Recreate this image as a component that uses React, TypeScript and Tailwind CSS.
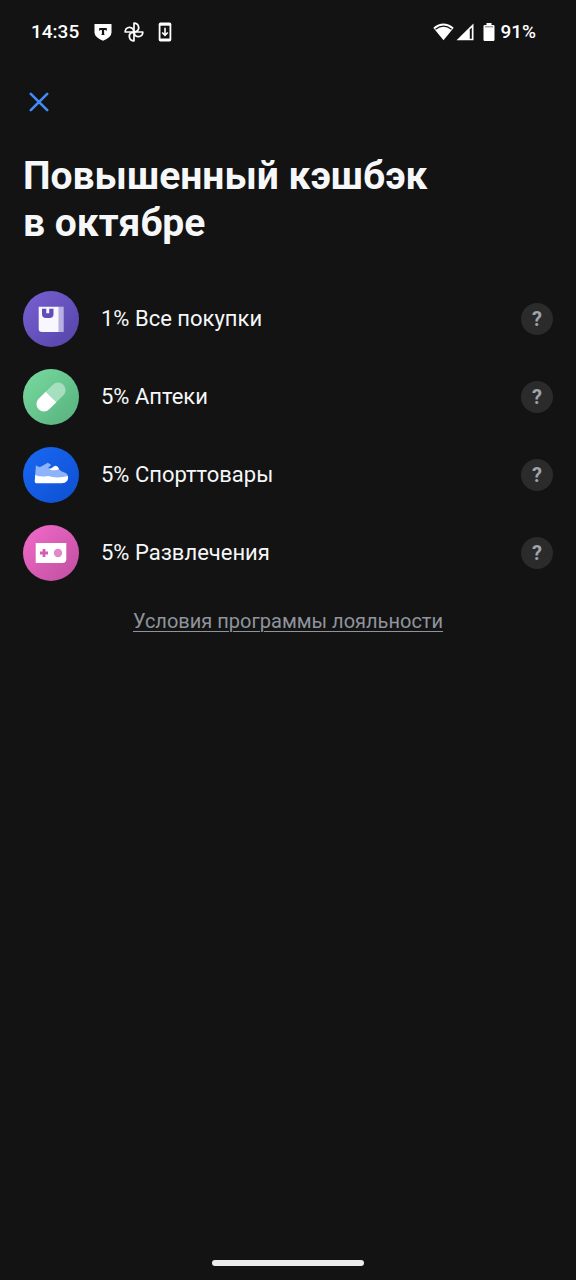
import type { ReactNode } from "react";

function BagIcon() {
  return (
    <svg viewBox="0 0 56 56" className="size-14" aria-hidden="true">
      <defs>
        <linearGradient id="bag" x1="0" y1="0" x2="1" y2="1">
          <stop offset="0" stopColor="#7860d3" />
          <stop offset="1" stopColor="#5444a6" />
        </linearGradient>
      </defs>
      <circle cx="28" cy="28" r="28" fill="url(#bag)" />
      <path d="M35.5 15.7H40.7V41H35.5Z" fill="#b9b0e2" />
      <path d="M15.7 15.7H35.7V41H19Q15.7 41 15.7 37.7Z" fill="#f8f7fd" />
      <path d="M19 17.8H23.3V22.2H26.2V17.8H30.5V23Q30.5 27 26.5 27H23Q19 27 19 23Z" fill="#604db9" />
    </svg>
  );
}

function PillIcon() {
  return (
    <svg viewBox="0 0 56 56" className="size-14" aria-hidden="true">
      <defs>
        <linearGradient id="pill" x1="0" y1="0" x2="1" y2="1">
          <stop offset="0" stopColor="#78dba1" />
          <stop offset="1" stopColor="#57b07c" />
        </linearGradient>
      </defs>
      <circle cx="28" cy="28" r="28" fill="url(#pill)" />
      <g transform="rotate(-45 28 28)">
        <path d="M28 20.5H38A7.5 7.5 0 0 1 38 35.5H28Z" fill="#a5dfbd" />
        <path d="M28 20.5H18A7.5 7.5 0 0 0 18 35.5H28Z" fill="#ffffff" />
      </g>
    </svg>
  );
}

function ShoeIcon() {
  return (
    <svg viewBox="0 0 56 56" className="size-14" aria-hidden="true">
      <defs>
        <linearGradient id="shoe" x1="0" y1="0" x2="1" y2="1">
          <stop offset="0" stopColor="#1969f4" />
          <stop offset="1" stopColor="#0e4fd0" />
        </linearGradient>
      </defs>
      <circle cx="28" cy="28" r="28" fill="url(#shoe)" />
      <path d="M12.9 18.3Q16.5 21.2 19.5 18.8L24.8 15.7L28.3 18L25 21L36 22.2Q38 24.4 41.5 25.6Q45 26.8 45 30L33 33L12 30Z" fill="#8db3fa" />
      <path d="M26.5 22.4L31.5 19Q34.3 18.2 36.3 22.2Q31.5 24.4 26.5 22.4Z" fill="#ffffff" />
      <path d="M12.2 28Q18 30.6 25 29Q34 31.8 45 29Q46 36.3 38.5 36.3H13.2Q11.7 36.3 11.7 34.5Z" fill="#ffffff" />
    </svg>
  );
}

function ConsoleIcon() {
  return (
    <svg viewBox="0 0 56 56" className="size-14" aria-hidden="true">
      <defs>
        <linearGradient id="console" x1="0" y1="0" x2="1" y2="1">
          <stop offset="0" stopColor="#f36aca" />
          <stop offset="1" stopColor="#bd4f9f" />
        </linearGradient>
      </defs>
      <circle cx="28" cy="28" r="28" fill="url(#console)" />
      <path d="M12.7 18H43.3V34Q43.3 38 39.3 38H12.7Z" fill="#ffffff" />
      <path d="M21 24V32M17 28H25" stroke="#d65cb3" strokeWidth="2.8" />
      <circle cx="35" cy="28" r="4.2" fill="#e08ac8" />
    </svg>
  );
}

function StatusBar() {
  return (
    <div className="flex h-16 items-center justify-between pr-10 pl-[31px] text-[19px] font-medium text-white">
      <div className="flex items-center">
        <time className="mr-[15px]">14:35</time>
        <svg viewBox="0 0 18 18" className="mr-3 size-[18px]" aria-hidden="true">
          <path d="M0.5 1H17.5V9.5Q17.5 14.2 9 17.8Q0.5 14.2 0.5 9.5Z" fill="#fff" />
          <path d="M5.2 5H12.8V7.8H12L11.6 7H10.1V11L10.8 12H7.2L7.9 11V7H6.4L6 7.8H5.2Z" fill="#131313" />
        </svg>
        <svg viewBox="0 0 20 20" className="mr-3.5 size-5" fill="none" stroke="#fff" strokeWidth="1.7" strokeLinejoin="round" aria-hidden="true">
          <path d="M10 10V1.2C15 1.2 16.2 7.2 12.6 9.2L10 10" />
          <path d="M10 10H18.8C18.8 15 12.8 16.2 10.8 12.6L10 10" />
          <path d="M10 10V18.8C5 18.8 3.8 12.8 7.4 10.8L10 10" />
          <path d="M10 10H1.2C1.2 5 7.2 3.8 9.2 7.4L10 10" />
        </svg>
        <svg viewBox="0 0 14 20" className="h-5 w-3.5" aria-hidden="true">
          <rect x="0.7" y="0.5" width="12.6" height="19" rx="1.8" fill="#fff" />
          <rect x="2.5" y="3.7" width="9" height="12.8" fill="#131313" />
          <path d="M7 5.7V13M4.2 10.5L7 13.3L9.8 10.5" fill="none" stroke="#fff" strokeWidth="1.6" />
        </svg>
      </div>
      <div className="flex items-center">
        <svg viewBox="0 0 21 18" className="mr-0.5 h-[18px] w-[21px]" aria-hidden="true">
          <path d="M0.3 4.7Q10.5 -3.5 20.7 4.7L10.5 17.3Z" fill="#fff" />
          <path d="M2.5 6.2Q10.5 0.2 18.5 6.2" fill="none" stroke="#131313" strokeWidth="1.3" />
        </svg>
        <svg viewBox="0 0 18 18" className="mr-[9px] size-[18px]" aria-hidden="true">
          <path d="M0.5 17.3L17.5 0.5V17.3Z" fill="#fff" />
          <path d="M13.8 6.5L15.8 4.5V15.8H13.8Z" fill="#131313" />
        </svg>
        <svg viewBox="0 0 12 20" className="mr-[5px] h-5 w-3" aria-hidden="true">
          <path d="M3.5 1H8.5V3H10.3Q11.5 3 11.5 4.2V17.8Q11.5 19 10.3 19H1.7Q0.5 19 0.5 17.8V4.2Q0.5 3 1.7 3H3.5Z" fill="#fff" />
          <path d="M1.8 4.8H10.2" stroke="#777" strokeWidth="1" />
        </svg>
        <span>91%</span>
      </div>
    </div>
  );
}

const categories: { label: string; icon: ReactNode }[] = [
  { label: "1% Все покупки", icon: <BagIcon /> },
  { label: "5% Аптеки", icon: <PillIcon /> },
  { label: "5% Спорттовары", icon: <ShoeIcon /> },
  { label: "5% Развлечения", icon: <ConsoleIcon /> },
];

export default function App() {
  return (
    <div className="flex min-h-screen flex-col bg-[#131313] font-[Roboto,sans-serif] text-[#f6f7f8]">
      <StatusBar />
      <main className="flex flex-1 flex-col px-[23px]">
        <button type="button" aria-label="Закрыть" className="mt-[22px] flex size-8 items-center justify-center text-[#428bf9]">
          <svg viewBox="0 0 20 20" className="size-5" fill="none" stroke="currentColor" strokeWidth="2.6" strokeLinecap="round" aria-hidden="true">
            <path d="M1.8 1.8L18.2 18.2M18.2 1.8L1.8 18.2" />
          </svg>
        </button>
        <h1 className="mt-[35px] text-[39px] leading-[47px] font-bold">
          Повышенный кэшбэк
          <br />в октябре
        </h1>
        <ul className="mt-11 flex flex-col gap-[22px]">
          {categories.map(({ label, icon }) => (
            <li key={label} className="flex items-center">
              {icon}
              <span className="ml-[22px] flex-1 text-[22px] leading-7">{label}</span>
              <button
                type="button"
                aria-label={`Подробнее: ${label}`}
                className="flex size-8 items-center justify-center rounded-full bg-[#2b2b2b] text-[20px] leading-6 font-bold text-[#a0a4ac]"
              >
                ?
              </button>
            </li>
          ))}
        </ul>
        <a href="#terms" className="mt-7 self-center text-[20px] leading-6 text-[#8f949c] underline decoration-1 underline-offset-3">
          Условия программы лояльности
        </a>
      </main>
      <div className="mx-auto mb-3.5 h-1.5 w-[152px] rounded-full bg-[#ececec]" />
    </div>
  );
}
